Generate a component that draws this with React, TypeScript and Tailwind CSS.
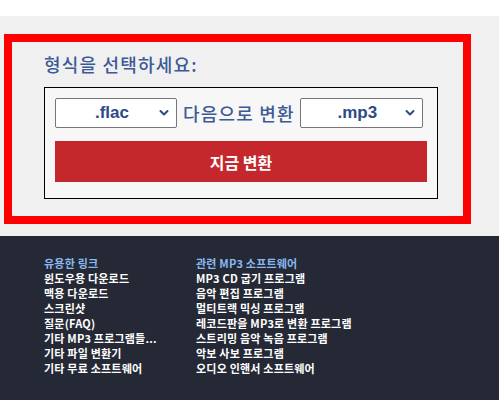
const ko = { fontFamily: '"Noto Sans CJK KR", "Liberation Sans", sans-serif' };
const arial = { fontFamily: '"Liberation Sans", Arial, sans-serif' };

const Chevron = () => (
  <svg className="pointer-events-none absolute right-[8px] top-1/2 -translate-y-1/2" width="10" height="7" viewBox="0 0 10 7">
    <path d="M1.5 1.5 L5 5 L8.5 1.5" fill="none" stroke="#2c4a86" strokeWidth="2" strokeLinecap="round" strokeLinejoin="round" />
  </svg>
);

const Picker = ({ value, options, width }: { value: string; options: string[]; width: string }) => (
  <div className={`relative h-[30px] ${width}`}>
    <select
      defaultValue={value}
      style={arial}
      className="h-full w-full appearance-none rounded-[2px] border border-[#767676] bg-white pr-[8px] text-center text-[17px] font-bold text-[#2c4a86] outline-none"
    >
      {options.map(o => (
        <option key={o} value={o}>{o}</option>
      ))}
    </select>
    <Chevron />
  </div>
);

const usefulLinks = ["윈도우용 다운로드", "맥용 다운로드", "스크린샷", "질문(FAQ)", "기타 MP3 프로그램들...", "기타 파일 변환기", "기타 무료 소프트웨어"];
const relatedLinks = ["MP3 CD 굽기 프로그램", "음악 편집 프로그램", "멀티트랙 믹싱 프로그램", "레코드판을 MP3로 변환 프로그램", "스트리밍 음악 녹음 프로그램", "악보 사보 프로그램", "오디오 인핸서 소프트웨어"];

const App = () => {
  return (
    <div className="min-h-screen bg-white" style={ko}>
      <div className="h-[16px] bg-white" />
      <section className="bg-[#f0f0f0] pl-[4px] pt-[18px] pb-[12px]">
        <div className="w-[467px] border-[8px] border-[#ff0000] pl-[32px] pt-[10px] pb-[17px]">
          <h2 className="text-[18px] font-medium leading-[24px] tracking-[1.2px] text-[#3d5a96]">형식을 선택하세요:</h2>
          <div className="mt-[11px] w-[394px] border border-black bg-[#f7f7f7] px-[10px] pt-[10px] pb-[16px]">
            <div className="flex items-center">
              <Picker value=".flac" options={[".flac", ".wav", ".ogg", ".aac"]} width="w-[122px]" />
              <span className="ml-[6px] mr-[5px] text-[18px] font-medium leading-[30px] tracking-[1.2px] text-[#3d5a96]">다음으로 변환</span>
              <Picker value=".mp3" options={[".mp3", ".wav", ".ogg", ".aac"]} width="w-[123px]" />
            </div>
            <button className="mt-[13px] h-[41px] w-[372px] bg-[#c4282d] text-[16px] font-bold text-white">
              지금 변환
            </button>
          </div>
        </div>
      </section>
      <footer className="bg-[#242935] pl-[44px] pt-[20px] pb-[24px]">
        <div className="flex text-[11px] font-bold leading-[15px] tracking-[0.2px] text-white">
          <ul className="w-[152px]">
            <li className="text-[#8ab8f2]">유용한 링크</li>
            {usefulLinks.map(l => <li key={l}>{l}</li>)}
          </ul>
          <ul>
            <li className="text-[#8ab8f2]">관련 MP3 소프트웨어</li>
            {relatedLinks.map(l => <li key={l}>{l}</li>)}
          </ul>
        </div>
      </footer>
    </div>
  );
};

export default App;
